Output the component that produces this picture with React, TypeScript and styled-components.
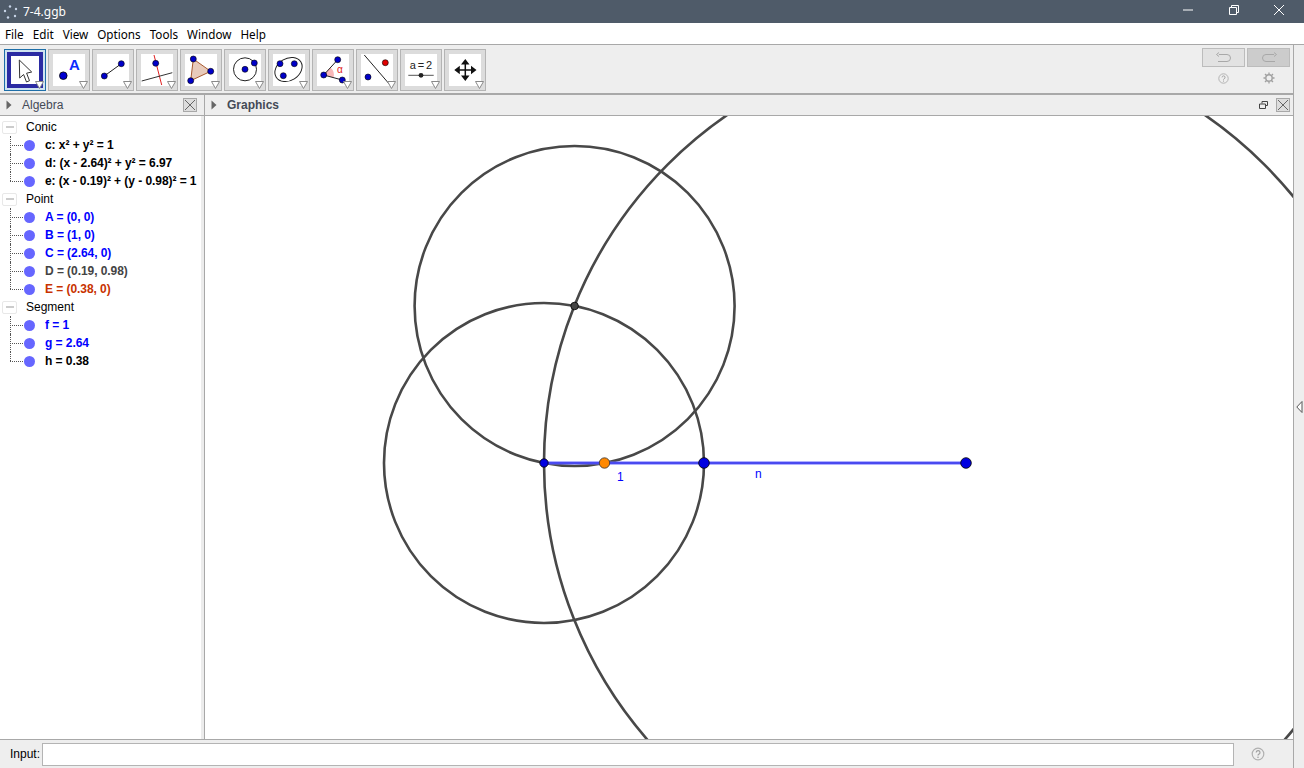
import React from "react";
import styled, { createGlobalStyle } from "styled-components";

const GlobalStyle = createGlobalStyle`
  html, body {
    margin: 0;
    padding: 0;
    width: 100%;
    height: 100%;
    overflow: hidden;
    background: #ffffff;
  }
  #root {
    height: 100%;
  }
`;

const Window = styled.div`
  width: 1304px;
  height: 768px;
  display: flex;
  flex-direction: column;
  font-family: "Liberation Sans", Arial, sans-serif;
  font-size: 12px;
  color: #000;
  overflow: hidden;
`;

const TitleBar = styled.div`
  height: 23px;
  flex: none;
  background: #4f5b69;
  display: flex;
  align-items: center;
  padding: 0 2px 0 3px;
  color: #fff;
`;

const TitleText = styled.span`
  font-family: "Noto Sans", sans-serif;
  font-size: 12px;
  margin-left: 4px;
  flex: 1;
`;

const WindowControl = styled.button`
  width: 45.5px;
  height: 20px;
  align-self: flex-start;
  padding: 0;
  border: none;
  background: none;
  display: flex;
  align-items: center;
  justify-content: center;
`;

const MenuBar = styled.div`
  height: 21px;
  flex: none;
  background: #fff;
  display: flex;
  align-items: center;
  padding-left: 5px;
  gap: 9px;
  font-family: "Noto Sans", sans-serif;
  font-size: 11.7px;
`;

const Body = styled.div`
  flex: 1;
  display: flex;
  min-height: 0;
`;

const Main = styled.div`
  flex: 1;
  display: flex;
  flex-direction: column;
  min-width: 0;
`;

const SideStrip = styled.div`
  width: 10px;
  flex: none;
  background: #eeeeee;
  border-left: 1px solid #a8a8a8;
  border-top: 1px solid #a8a8a8;
  display: flex;
  align-items: flex-start;
  padding-top: 356px;
`;

const ToolBar = styled.div`
  height: 44px;
  flex: none;
  background: #eeeeee;
  border-top: 1px solid #a8a8a8;
  border-bottom: 2px solid #a8a8a8;
  display: flex;
  align-items: flex-start;
  padding: 4px 3px 0 4px;
  gap: 2px;
`;

const ToolButton = styled.div<{ $active?: boolean }>`
  position: relative;
  width: 42px;
  height: 42px;
  box-sizing: border-box;
  flex: none;
  display: flex;
  align-items: center;
  justify-content: center;
  background: ${(p) => (p.$active ? "#cfe3f0" : "#dcdcdc")};
  border: 1px solid ${(p) => (p.$active ? "#1d6ea8" : "#b4b4b4")};
`;

const ToolTile = styled.div<{ $active?: boolean }>`
  background: #fff;
  display: flex;
  width: ${(p) => (p.$active ? "28px" : "32px")};
  height: ${(p) => (p.$active ? "28px" : "32px")};
  border: ${(p) => (p.$active ? "4px solid #2b2ba3" : "none")};
`;

const ToolArrow = styled.svg`
  position: absolute;
  right: 1px;
  bottom: 1px;
`;

const HistoryArea = styled.div`
  margin-left: auto;
  margin-top: -1px;
  display: flex;
  flex-direction: column;
  gap: 3px;
`;

const HistoryRow = styled.div`
  display: flex;
  gap: 2px;
  justify-content: space-between;
`;

const HistoryButton = styled.div<{ $pressed?: boolean }>`
  width: 43px;
  height: 19px;
  box-sizing: border-box;
  border: 1px solid #bcbcbc;
  background: ${(p) => (p.$pressed ? "#cccccc" : "#e2e2e2")};
  display: flex;
  align-items: center;
  justify-content: center;
`;

const HistoryIcon = styled.div`
  width: 43px;
  height: 16px;
  display: flex;
  align-items: center;
  justify-content: center;
`;

const Panels = styled.div`
  flex: 1;
  display: flex;
  min-height: 0;
`;

const AlgebraPanel = styled.section`
  width: 204px;
  flex: none;
  display: flex;
  flex-direction: column;
  border-right: 1px solid #a8a8a8;
`;

const GraphicsPanel = styled.section`
  flex: 1;
  display: flex;
  flex-direction: column;
  min-width: 0;
`;

const PanelHeader = styled.div`
  height: 20px;
  flex: none;
  background: #eeeeee;
  border-bottom: 1px solid #a8a8a8;
  display: flex;
  align-items: center;
  padding-left: 6px;
  padding-right: 3px;
`;

const AlgebraHeader = styled(PanelHeader)`
  padding-right: 7px;
`;

const PanelTitle = styled.span<{ $bold?: boolean }>`
  margin-left: 10px;
  font-weight: ${(p) => (p.$bold ? 700 : 400)};
  color: #444a56;
  flex: 1;
`;

const CloseBox = styled.div`
  width: 14px;
  height: 14px;
  box-sizing: border-box;
  border: 1px solid #a8a8a8;
  background: #dddddd;
  display: flex;
  align-items: center;
  justify-content: center;
`;

const DetachIcon = styled.svg`
  margin-right: 8px;
`;

const AlgebraTree = styled.div`
  flex: 1;
  padding-top: 2px;
  background: #fff;
  border-right: 3px solid #ececec;
`;

const GroupRow = styled.div`
  height: 18px;
  display: flex;
  align-items: center;
  padding-left: 2px;
`;

const Collapse = styled.div`
  width: 15px;
  height: 13px;
  box-sizing: border-box;
  border: 1px solid #e8e8e8;
  border-radius: 2px;
  display: flex;
  align-items: center;
  justify-content: center;
  &::before {
    content: "";
    width: 8px;
    height: 2px;
    background: #cccccc;
  }
`;

const GroupName = styled.span`
  margin-left: 9px;
  font-size: 12px;
`;

const ItemRow = styled.div<{ $last?: boolean }>`
  position: relative;
  height: 18px;
  display: flex;
  align-items: center;
  padding-left: 24px;
  &::before {
    content: "";
    position: absolute;
    left: 10px;
    top: 0;
    width: 13px;
    height: ${(p) => (p.$last ? "9px" : "18px")};
    border-left: 1px dotted #555;
  }
  &::after {
    content: "";
    position: absolute;
    left: 10px;
    top: 9px;
    width: 13px;
    border-top: 1px dotted #555;
  }
`;

const Marble = styled.span`
  width: 11px;
  height: 11px;
  border-radius: 50%;
  background: #6666ff;
  flex: none;
`;

const ItemText = styled.span<{ $color: string }>`
  margin-left: 10px;
  font-weight: 700;
  font-size: 12px;
  letter-spacing: -0.06px;
  color: ${(p) => p.$color};
  white-space: nowrap;
`;

const CanvasFrame = styled.div`
  flex: 1;
  min-height: 0;
  background: #fff;
  overflow: hidden;
  display: flex;
`;

const InputBar = styled.div`
  height: 28px;
  flex: none;
  background: #eeeeee;
  border-top: 1px solid #a8a8a8;
  display: flex;
  align-items: center;
  padding-left: 10px;
`;

const InputLabel = styled.label`
  font-size: 12px;
  width: 32px;
  flex: none;
`;

const InputField = styled.input`
  width: 1192px;
  height: 23px;
  box-sizing: border-box;
  border: 1px solid #b4b4b4;
  background: #fff;
  padding: 0;
  outline: none;
  flex: none;
`;

const InputHelp = styled.div`
  margin-left: 17px;
  display: flex;
`;

const SideArrow = styled.svg`
  margin-left: 2px;
`;

function Pt({ x, y, c = "#0000c8", r = 3 }: { x: number; y: number; c?: string; r?: number }) {
  return <circle cx={x} cy={y} r={r} fill={c} stroke="#000" strokeWidth={0.6} />;
}

const toolIcons: React.ReactNode[] = [
  <path key="m" d="M8.3 4 L8.7 22 L12.6 18.5 L15.5 26 L18.5 24.7 L15.6 17.2 L20.7 16 Z" fill="#fff" stroke="#333" strokeWidth={1} strokeLinejoin="round" />,
  <g key="p">
    <circle cx={10.3} cy={21.7} r={3.8} fill="#0000d0" stroke="#000" strokeWidth={0.8} />
    <text x={21.5} y={15.5} textAnchor="middle" fontFamily="Liberation Sans, sans-serif" fontWeight={700} fontSize={15} fill="#0a2cff">A</text>
  </g>,
  <g key="l">
    <line x1={7.3} y1={22} x2={24.3} y2={9.7} stroke="#222" strokeWidth={1} />
    <Pt x={7.3} y={22} />
    <Pt x={24.3} y={9.7} />
  </g>,
  <g key="perp">
    <line x1={13} y1={1} x2={20.7} y2={31} stroke="#e02020" strokeWidth={1} />
    <line x1={0.7} y1={27} x2={31.3} y2={18.7} stroke="#333" strokeWidth={1} />
    <Pt x={14.7} y={9.3} />
  </g>,
  <g key="poly">
    <polygon points="8.3,5 25.7,17.3 5.7,26.7" fill="#e8cbbb" stroke="#a85a30" strokeWidth={1} />
    <Pt x={8.3} y={5} />
    <Pt x={25.7} y={17.3} />
    <Pt x={5.7} y={26.7} />
  </g>,
  <g key="circ">
    <circle cx={16} cy={15.3} r={11.5} fill="none" stroke="#222" strokeWidth={1} />
    <Pt x={16} y={15.3} />
    <Pt x={25.3} y={9} />
  </g>,
  <g key="ell">
    <ellipse cx={15.5} cy={15.5} rx={14.5} ry={11} transform="rotate(-32 15.5 15.5)" fill="none" stroke="#222" strokeWidth={1} />
    <Pt x={7} y={9.7} />
    <Pt x={21.3} y={9.7} />
    <Pt x={10.3} y={21.7} />
  </g>,
  <g key="ang">
    <path d="M6.7 21 L13.5 13.5 A10 10 0 0 1 16.5 23.6 Z" fill="#f8b8b8" />
    <path d="M20.7 5.7 L6.7 21 L25.3 26" fill="none" stroke="#222" strokeWidth={1} />
    <Pt x={6.7} y={21} />
    <Pt x={20.7} y={5.7} />
    <Pt x={25.3} y={26} />
    <text x={23} y={19} textAnchor="middle" fontFamily="Liberation Sans, sans-serif" fontSize={10} fill="#e02020">α</text>
  </g>,
  <g key="par">
    <line x1={3.3} y1={1} x2={29.7} y2={31.7} stroke="#222" strokeWidth={1} />
    <Pt x={24.3} y={8.7} c="#e00000" />
    <Pt x={7} y={23} />
  </g>,
  <g key="sl">
    <text x={16} y={15} textAnchor="middle" wordSpacing={-1.2} fontFamily="Liberation Sans, sans-serif" fontSize={11} fill="#222">a = 2</text>
    <line x1={3.3} y1={21.3} x2={28.7} y2={21.3} stroke="#555" strokeWidth={1} />
    <circle cx={16} cy={21.3} r={2.4} fill="#222" />
  </g>,
  <g key="mv">
    <path d="M16.3 9 V23 M9 16 H23.5" stroke="#111" strokeWidth={1.5} />
    <path d="M16.3 5 L20.5 10.5 H12 Z M16.3 27 L20.5 21.5 H12 Z M5.3 16 L10.8 11.8 V20.2 Z M27.5 16 L22 11.8 V20.2 Z" fill="#111" />
  </g>,
];

function HelpIcon() {
  return (
    <svg width="14" height="14" viewBox="0 0 14 14">
      <circle cx="7" cy="7" r="5.8" fill="none" stroke="#b0b0b0" strokeWidth="1.2" />
      <path d="M5.2 5.6 A1.9 1.9 0 1 1 7.6 7.4 Q7 7.7 7 8.6" fill="none" stroke="#a0a0a0" strokeWidth="1.2" />
      <circle cx="7" cy="10.3" r="0.8" fill="#a0a0a0" />
    </svg>
  );
}

function CloseX() {
  return (
    <svg width="12" height="12" viewBox="0 0 12 12">
      <path d="M1 1 L11 11 M11 1 L1 11" stroke="#666" strokeWidth="1" />
    </svg>
  );
}

function Triangle() {
  return (
    <svg width="6" height="10" viewBox="0 0 6 10">
      <path d="M0.5 0.5 L5.5 5 L0.5 9.5 Z" fill="#666" />
    </svg>
  );
}

type Item = { text: string; color: string };
const groups: { name: string; items: Item[] }[] = [
  {
    name: "Conic",
    items: [
      { text: "c: x² + y² = 1", color: "#000" },
      { text: "d: (x - 2.64)² + y² = 6.97", color: "#000" },
      { text: "e: (x - 0.19)² + (y - 0.98)² = 1", color: "#000" },
    ],
  },
  {
    name: "Point",
    items: [
      { text: "A = (0, 0)", color: "#0000ff" },
      { text: "B = (1, 0)", color: "#0000ff" },
      { text: "C = (2.64, 0)", color: "#0000ff" },
      { text: "D = (0.19, 0.98)", color: "#444444" },
      { text: "E = (0.38, 0)", color: "#c83200" },
    ],
  },
  {
    name: "Segment",
    items: [
      { text: "f = 1", color: "#0000ff" },
      { text: "g = 2.64", color: "#0000ff" },
      { text: "h = 0.38", color: "#000" },
    ],
  },
];

const menus = ["File", "Edit", "View", "Options", "Tools", "Window", "Help"];

export default function App() {
  return (
    <>
      <GlobalStyle />
      <Window>
        <TitleBar>
          <svg width="16" height="16" viewBox="0 0 16 16">
            <g fill="#c8d4e8">
              <circle cx="7" cy="2.5" r="1.2" />
              <circle cx="13" cy="5" r="1.2" />
              <circle cx="12" cy="12" r="1.2" />
              <circle cx="5" cy="13.5" r="1.2" />
              <circle cx="2" cy="7" r="1.2" />
            </g>
          </svg>
          <TitleText>7-4.ggb</TitleText>
          <WindowControl>
            <svg width="12" height="12" viewBox="0 0 12 12">
              <path d="M1 6 H11" stroke="#fff" strokeWidth="1" />
            </svg>
          </WindowControl>
          <WindowControl>
            <svg width="12" height="12" viewBox="0 0 12 12">
              <path d="M1.5 3.5 H8.5 V10.5 H1.5 Z M3.5 3.5 V1.5 H10.5 V8.5 H8.5" fill="none" stroke="#fff" strokeWidth="1" />
            </svg>
          </WindowControl>
          <WindowControl>
            <svg width="12" height="12" viewBox="0 0 12 12">
              <path d="M1 1 L11 11 M11 1 L1 11" stroke="#fff" strokeWidth="1" />
            </svg>
          </WindowControl>
        </TitleBar>
        <MenuBar>
          {menus.map((m) => (
            <span key={m}>{m}</span>
          ))}
        </MenuBar>
        <Body>
          <Main>
            <ToolBar>
              {toolIcons.map((icon, i) => (
                <ToolButton key={i} $active={i === 0}>
                  <ToolTile $active={i === 0}>
                    <svg width={i === 0 ? 28 : 32} height={i === 0 ? 28 : 32} viewBox={i === 0 ? "0 0 28 28" : "0 0 32 32"}>
                      {icon}
                    </svg>
                  </ToolTile>
                  <ToolArrow width="9" height="8" viewBox="0 0 9 8">
                    <path d="M0.5 0.5 H8.5 L4.5 7.5 Z" fill="#fff" stroke="#8a8a8a" strokeWidth="1" />
                  </ToolArrow>
                </ToolButton>
              ))}
              <HistoryArea>
                <HistoryRow>
                  <HistoryButton>
                    <svg width="18" height="12" viewBox="0 0 18 12">
                      <path d="M4 2.5 H12 A3.5 3.5 0 0 1 12 9.5 H3 M4 0.5 L1.5 2.5 L4 4.5" fill="none" stroke="#a8a8a8" strokeWidth="1" />
                    </svg>
                  </HistoryButton>
                  <HistoryButton $pressed>
                    <svg width="18" height="12" viewBox="0 0 18 12">
                      <path d="M14 2.5 H6 A3.5 3.5 0 0 0 6 9.5 H15 M14 0.5 L16.5 2.5 L14 4.5" fill="none" stroke="#a8a8a8" strokeWidth="1" />
                    </svg>
                  </HistoryButton>
                </HistoryRow>
                <HistoryRow>
                  <HistoryIcon>
                    <svg width="11" height="11" viewBox="0 0 14 14">
                      <circle cx="7" cy="7" r="6" fill="none" stroke="#b0b0b0" strokeWidth="1.2" />
                      <path d="M5.2 5.6 A1.9 1.9 0 1 1 7.6 7.4 Q7 7.7 7 8.6 M7 9.6 V11" fill="none" stroke="#a0a0a0" strokeWidth="1.2" />
                    </svg>
                  </HistoryIcon>
                  <HistoryIcon>
                    <svg width="12" height="12" viewBox="0 0 12 12">
                      <circle cx="6" cy="6" r="3.2" fill="none" stroke="#a0a0a0" strokeWidth="1.4" />
                      <path d="M6 0.5 V2.5 M6 9.5 V11.5 M0.5 6 H2.5 M9.5 6 H11.5 M2 2 L3.5 3.5 M8.5 8.5 L10 10 M10 2 L8.5 3.5 M3.5 8.5 L2 10" stroke="#a0a0a0" strokeWidth="1.3" />
                    </svg>
                  </HistoryIcon>
                </HistoryRow>
              </HistoryArea>
            </ToolBar>
            <Panels>
              <AlgebraPanel>
                <AlgebraHeader>
                  <Triangle />
                  <PanelTitle>Algebra</PanelTitle>
                  <CloseBox>
                    <CloseX />
                  </CloseBox>
                </AlgebraHeader>
                <AlgebraTree>
                  {groups.map((g) => (
                    <div key={g.name}>
                      <GroupRow>
                        <Collapse />
                        <GroupName>{g.name}</GroupName>
                      </GroupRow>
                      {g.items.map((it, i) => (
                        <ItemRow key={it.text} $last={i === g.items.length - 1}>
                          <Marble />
                          <ItemText $color={it.color}>{it.text}</ItemText>
                        </ItemRow>
                      ))}
                    </div>
                  ))}
                </AlgebraTree>
              </AlgebraPanel>
              <GraphicsPanel>
                <PanelHeader>
                  <Triangle />
                  <PanelTitle $bold>Graphics</PanelTitle>
                  <DetachIcon width="9" height="8" viewBox="0 0 9 8">
                    <path d="M0.5 3 H6.5 V7.5 H0.5 Z M3 2.5 V0.5 H8.5 V4.5 H7" fill="none" stroke="#444" strokeWidth="1" />
                  </DetachIcon>
                  <CloseBox>
                    <CloseX />
                  </CloseBox>
                </PanelHeader>
                <CanvasFrame>
                  <svg width="1088" height="623" viewBox="205 116 1088 623">
                    <g fill="none" stroke="#484848" strokeWidth="2.6">
                      <circle cx="544" cy="463" r="160" />
                      <circle cx="966" cy="463" r="422" />
                      <circle cx="574.6" cy="306" r="160" />
                    </g>
                    <line x1="544" y1="463" x2="966" y2="463" stroke="#6464ff" strokeWidth="3" />
                    <line x1="544" y1="463" x2="966" y2="463" stroke="#3030e0" strokeWidth="1" />
                    <circle cx="574.6" cy="306" r="3.8" fill="#444" stroke="#000" strokeWidth="0.8" />
                    <circle cx="544" cy="463" r="4.2" fill="#0000e0" stroke="#000" strokeWidth="0.8" />
                    <circle cx="704" cy="463" r="5.3" fill="#0000e0" stroke="#000" strokeWidth="0.8" />
                    <circle cx="966" cy="463" r="5.3" fill="#0000e0" stroke="#000" strokeWidth="0.8" />
                    <circle cx="604.5" cy="463" r="5.2" fill="#ff8800" stroke="#333" strokeWidth="0.8" />
                    <text x="617" y="481" fontFamily="Liberation Sans, sans-serif" fontSize="12" fill="#0000ff">1</text>
                    <text x="755" y="478" fontFamily="Liberation Sans, sans-serif" fontSize="12" fill="#0000ff">n</text>
                  </svg>
                </CanvasFrame>
              </GraphicsPanel>
            </Panels>
            <InputBar>
              <InputLabel htmlFor="input-bar">Input:</InputLabel>
              <InputField id="input-bar" />
              <InputHelp>
                <HelpIcon />
              </InputHelp>
            </InputBar>
          </Main>
          <SideStrip>
            <SideArrow width="7" height="12" viewBox="0 0 7 12">
              <path d="M6 0.5 L0.8 6 L6 11.5 Z" fill="#fff" stroke="#555" strokeWidth="1" />
            </SideArrow>
          </SideStrip>
        </Body>
      </Window>
    </>
  );
}
